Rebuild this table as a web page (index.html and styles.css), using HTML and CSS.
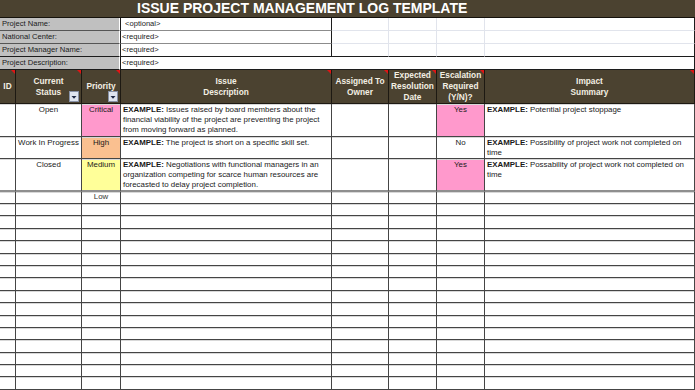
FILE: index.html
```html
<!DOCTYPE html>
<html>
<head>
<meta charset="utf-8">
<link rel="stylesheet" href="styles.css">
</head>
<body>
<div class="title">ISSUE PROJECT MANAGEMENT LOG TEMPLATE</div>

<div class="info">
  <div class="lbl">Project Name:</div><div class="val opt">&lt;optional&gt;</div><div class="blank"></div><div class="blank"></div><div class="blank"></div><div class="blank end"></div>
  <div class="lbl">National Center:</div><div class="val">&lt;required&gt;</div><div class="blank"></div><div class="blank"></div><div class="blank"></div><div class="blank end"></div>
  <div class="lbl b">Project Manager Name:</div><div class="val b">&lt;required&gt;</div><div class="blank b"></div><div class="blank b"></div><div class="blank b"></div><div class="blank end b"></div>
  <div class="lbl b">Project Description:</div><div class="val wide b">&lt;required&gt;</div>
</div>

<div class="head">
  <div>ID<span class="note"></span></div>
  <div>Current<br>Status<span class="note"></span>
    <svg class="dd" width="10" height="11" viewBox="0 0 10 11"><rect x="0.5" y="0.5" width="9" height="10" fill="#dfe5ef" stroke="#8791a6"/><path d="M2.5 5 L7.5 5 L5 7.8 Z" fill="#1e2842"/></svg>
  </div>
  <div>Priority<span class="note"></span>
    <svg class="dd" width="10" height="11" viewBox="0 0 10 11"><rect x="0.5" y="0.5" width="9" height="10" fill="#dfe5ef" stroke="#8791a6"/><path d="M2.5 5 L7.5 5 L5 7.8 Z" fill="#1e2842"/></svg>
  </div>
  <div>Issue<br>Description<span class="note"></span></div>
  <div>Assigned To<br>Owner<span class="note"></span></div>
  <div>Expected<br>Resolution<br>Date<span class="note"></span></div>
  <div>Escalation<br>Required<br>(Y/N)?<span class="note"></span></div>
  <div>Impact<br>Summary<span class="note"></span></div>
</div>

<div class="row h33">
  <div></div>
  <div class="c">Open</div>
  <div class="c crit">Critical</div>
  <div class="txt"><b>EXAMPLE:</b> Issues raised by board members about the financial viability of the project are preventing the project from moving forward as planned.</div>
  <div></div>
  <div></div>
  <div class="c yes">Yes</div>
  <div class="txt"><b>EXAMPLE:</b> Potential project stoppage</div>
</div>
<div class="row h22">
  <div></div>
  <div class="c">Work In Progress</div>
  <div class="c high">High</div>
  <div class="txt"><b>EXAMPLE:</b> The project is short on a specific skill set.</div>
  <div></div>
  <div></div>
  <div class="c">No</div>
  <div class="txt"><b>EXAMPLE:</b> Possibility of project work not completed on time</div>
</div>
<div class="row h33 sep">
  <div></div>
  <div class="c">Closed</div>
  <div class="c med">Medium</div>
  <div class="txt"><b>EXAMPLE:</b> Negotiations with functional managers in an organization competing for scarce human resources are forecasted to delay project completion.</div>
  <div></div>
  <div></div>
  <div class="c yes">Yes</div>
  <div class="txt"><b>EXAMPLE:</b> Possability of project work not completed on time</div>
</div>
<div class="row h12">
  <div></div><div></div><div class="c low">Low</div><div></div><div></div><div></div><div></div><div></div>
</div>
<div class="row e"><div></div><div></div><div></div><div></div><div></div><div></div><div></div><div></div></div>
<div class="row e"><div></div><div></div><div></div><div></div><div></div><div></div><div></div><div></div></div>
<div class="row e"><div></div><div></div><div></div><div></div><div></div><div></div><div></div><div></div></div>
<div class="row e"><div></div><div></div><div></div><div></div><div></div><div></div><div></div><div></div></div>
<div class="row e"><div></div><div></div><div></div><div></div><div></div><div></div><div></div><div></div></div>
<div class="row e"><div></div><div></div><div></div><div></div><div></div><div></div><div></div><div></div></div>
<div class="row e"><div></div><div></div><div></div><div></div><div></div><div></div><div></div><div></div></div>
<div class="row e"><div></div><div></div><div></div><div></div><div></div><div></div><div></div><div></div></div>
<div class="row e"><div></div><div></div><div></div><div></div><div></div><div></div><div></div><div></div></div>
<div class="row e"><div></div><div></div><div></div><div></div><div></div><div></div><div></div><div></div></div>
<div class="row e"><div></div><div></div><div></div><div></div><div></div><div></div><div></div><div></div></div>
<div class="row e"><div></div><div></div><div></div><div></div><div></div><div></div><div></div><div></div></div>
<div class="row e"><div></div><div></div><div></div><div></div><div></div><div></div><div></div><div></div></div>
<div class="row e"><div></div><div></div><div></div><div></div><div></div><div></div><div></div><div></div></div>
<div class="row e"><div></div><div></div><div></div><div></div><div></div><div></div><div></div><div></div></div>
<div class="row e"><div></div><div></div><div></div><div></div><div></div><div></div><div></div><div></div></div>
</body>
</html>
```
FILE: styles.css
```css
* { box-sizing: border-box; }

body {
  margin: 0;
  width: 695px;
  height: 390px;
  overflow: hidden;
  background: #ffffff;
  font-family: "Liberation Sans", Arial, sans-serif;
  color: #1a1a1a;
}

.title {
  height: 18px;
  background: #4b4230;
  border-bottom: 1px solid #15120c;
  color: #ffffff;
  font-weight: bold;
  font-size: 14px;
  line-height: 17px;
  padding-left: 137px;
  white-space: nowrap;
}

.info {
  display: grid;
  grid-template-columns: 120px 212px 57px 48px 48px 210px;
  grid-auto-rows: 13px;
  font-size: 7.6px;
  line-height: 12px;
  white-space: nowrap;
}

.lbl {
  background: #c0c0c0;
  border-bottom: 1px solid #555555;
  border-right: 1px solid #ffffff;
  padding-left: 2px;
  color: #1a1a1a;
}

.val {
  border-left: 1px solid #1c1c1c;
  border-right: 1px solid #1c1c1c;
  border-bottom: 1px solid #8c8c8c;
  padding-left: 1px;
}

.val.opt { padding-left: 4px; }

.val.wide { grid-column: 2 / -1; }

.blank {
  border-right: 1px solid #e1e4ec;
  border-bottom: 1px solid #e1e4ec;
}

.blank.end { border-right-color: #1c1c1c; }

.info .b { border-bottom-color: #1c1c1c; }

.head {
  display: grid;
  grid-template-columns: 16px 66px 39px 211px 57px 48px 48px 210px;
  height: 34px;
  background: #4b4230;
}

.head > div {
  position: relative;
  border-right: 1px solid #1d1912;
  border-bottom: 1px solid #1d1912;
  display: flex;
  align-items: center;
  justify-content: center;
  text-align: center;
  font-weight: bold;
  font-size: 8.3px;
  line-height: 10.7px;
  color: #f3efe3;
}

.note {
  position: absolute;
  top: 0;
  right: 0;
  width: 0;
  height: 0;
  border-left: 4px solid transparent;
  border-top: 4px solid #e01414;
}

.dd {
  position: absolute;
  right: 2px;
  bottom: 1px;
}

.row {
  display: grid;
  grid-template-columns: 16px 66px 39px 211px 57px 48px 48px 210px;
}

.row > div {
  border-right: 1px solid #454545;
  border-bottom: 1px solid #454545;
  box-shadow: inset 0 1px 0 #d8d8d8;
  padding: 1px 2px 0;
  font-size: 7.9px;
  line-height: 10px;
  overflow: hidden;
  white-space: normal;
}

.row > div.c { text-align: center; white-space: nowrap; padding: 1px 0 0; }

.h33 { height: 33px; }
.h22 { height: 22px; }
.h12 { height: 12px; }
.e { height: 12.4px; }

.sep > div { border-bottom: 2px solid #8f8f8f; }

.row.h12 > div { padding-top: 0; }

.crit, .yes { background: #ff99cc; }
.high { background: #fac090; }
.med { background: #ffff99; }
.low { color: #333333; }
```
